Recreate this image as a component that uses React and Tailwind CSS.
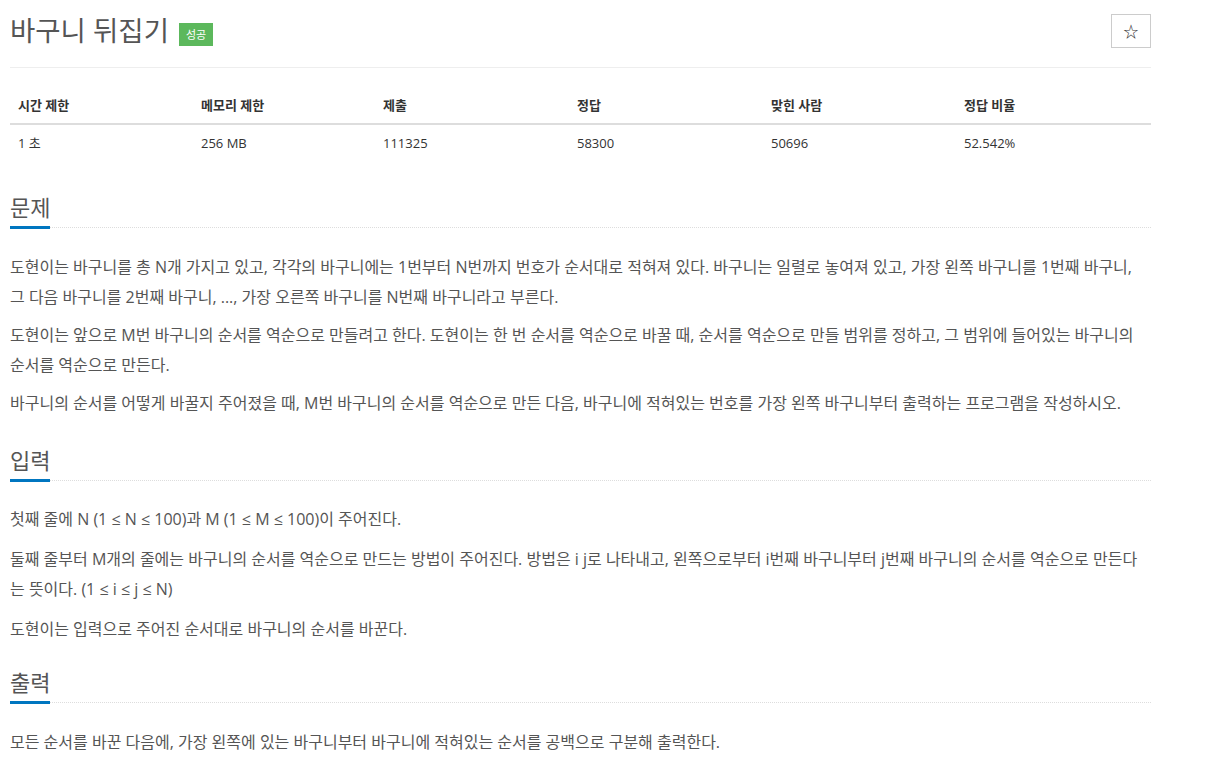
import React from "react";

const font = { fontFamily: '"Open Sans", "Noto Sans CJK KR", sans-serif' };

function Heading({ children, mt }) {
  return (
    <div className={`border-b border-dotted border-[#dddddd] ${mt}`}>
      <h2 className="inline-block text-[22px] leading-[30px] text-[#555555] pb-[4px] border-b-[3px] border-[#0076c0] -mb-[2px]">
        {children}
      </h2>
    </div>
  );
}

export default function App() {
  const cols = [
    ["시간 제한", "1 초", "w-[183px]"],
    ["메모리 제한", "256 MB", "w-[182px]"],
    ["제출", "111325", "w-[194px]"],
    ["정답", "58300", "w-[194px]"],
    ["맞힌 사람", "50696", "w-[193px]"],
    ["정답 비율", "52.542%", "w-[195px]"],
  ];
  return (
    <div className="w-[1211px] min-h-[762px] bg-white" style={font}>
      <div className="ml-[10px] w-[1141px]">
        <div className="h-[68px] border-b border-[#eeeeee] flex justify-between items-start">
          <div className="flex items-center pt-[11px]">
            <h1 className="text-[27.5px] leading-[40px] text-[#555555]">바구니 뒤집기</h1>
            <span className="ml-[10px] mt-[6px] bg-[#5cb85c] text-white text-[11px] leading-[23px] h-[23px] px-[7px]">성공</span>
          </div>
          <button className="mt-[14px] w-[40px] h-[34px] border border-[#cccccc] bg-white text-[#333333] text-[15px] flex items-center justify-center">
            ☆
          </button>
        </div>

        <table className="mt-[19px] w-[1141px] border-collapse text-[13px] leading-[20px] table-fixed">
          <thead>
            <tr>
              {cols.map((c) => (
                <th key={c[0]} className={`${c[2]} text-left font-bold text-[#333333] px-[8px] py-[8px] border-b-2 border-[#dddddd]`}>
                  {c[0]}
                </th>
              ))}
            </tr>
          </thead>
          <tbody>
            <tr>
              {cols.map((c) => (
                <td key={c[0]} className="text-[#333333] px-[8px] py-[8px]">
                  {c[1]}
                </td>
              ))}
            </tr>
          </tbody>
        </table>

        <Heading mt="mt-[31px]">문제</Heading>
        <div className="w-[1135px] text-[16px] leading-[30px] text-[#555555]">
          <p className="mt-[24px]">
            도현이는 바구니를 총 N개 가지고 있고, 각각의 바구니에는 1번부터 N번까지 번호가 순서대로 적혀져 있다. 바구니는 일렬로 놓여져 있고, 가장 왼쪽 바구니를 1번째 바구니, 그 다음 바구니를 2번째 바구니, ..., 가장 오른쪽 바구니를 N번째 바구니라고 부른다.
          </p>
          <p className="mt-[8px]">
            도현이는 앞으로 M번 바구니의 순서를 역순으로 만들려고 한다. 도현이는 한 번 순서를 역순으로 바꿀 때, 순서를 역순으로 만들 범위를 정하고, 그 범위에 들어있는 바구니의 순서를 역순으로 만든다.
          </p>
          <p className="mt-[8px]">
            바구니의 순서를 어떻게 바꿀지 주어졌을 때, M번 바구니의 순서를 역순으로 만든 다음, 바구니에 적혀있는 번호를 가장 왼쪽 바구니부터 출력하는 프로그램을 작성하시오.
          </p>
        </div>

        <Heading mt="mt-[27px]">입력</Heading>
        <div className="w-[1135px] text-[16px] leading-[30px] text-[#555555]">
          <p className="mt-[23px]">첫째 줄에 N (1 ≤ N ≤ 100)과 M (1 ≤ M ≤ 100)이 주어진다.</p>
          <p className="mt-[10px]">
            둘째 줄부터 M개의 줄에는 바구니의 순서를 역순으로 만드는 방법이 주어진다. 방법은 i j로 나타내고, 왼쪽으로부터 i번째 바구니부터 j번째 바구니의 순서를 역순으로 만든다는 뜻이다. (1 ≤ i ≤ j ≤ N)
          </p>
          <p className="mt-[10px]">도현이는 입력으로 주어진 순서대로 바구니의 순서를 바꾼다.</p>
        </div>

        <Heading mt="mt-[23px]">출력</Heading>
        <div className="w-[1135px] text-[16px] leading-[30px] text-[#555555]">
          <p className="mt-[24px]">모든 순서를 바꾼 다음에, 가장 왼쪽에 있는 바구니부터 바구니에 적혀있는 순서를 공백으로 구분해 출력한다.</p>
        </div>
      </div>
    </div>
  );
}
